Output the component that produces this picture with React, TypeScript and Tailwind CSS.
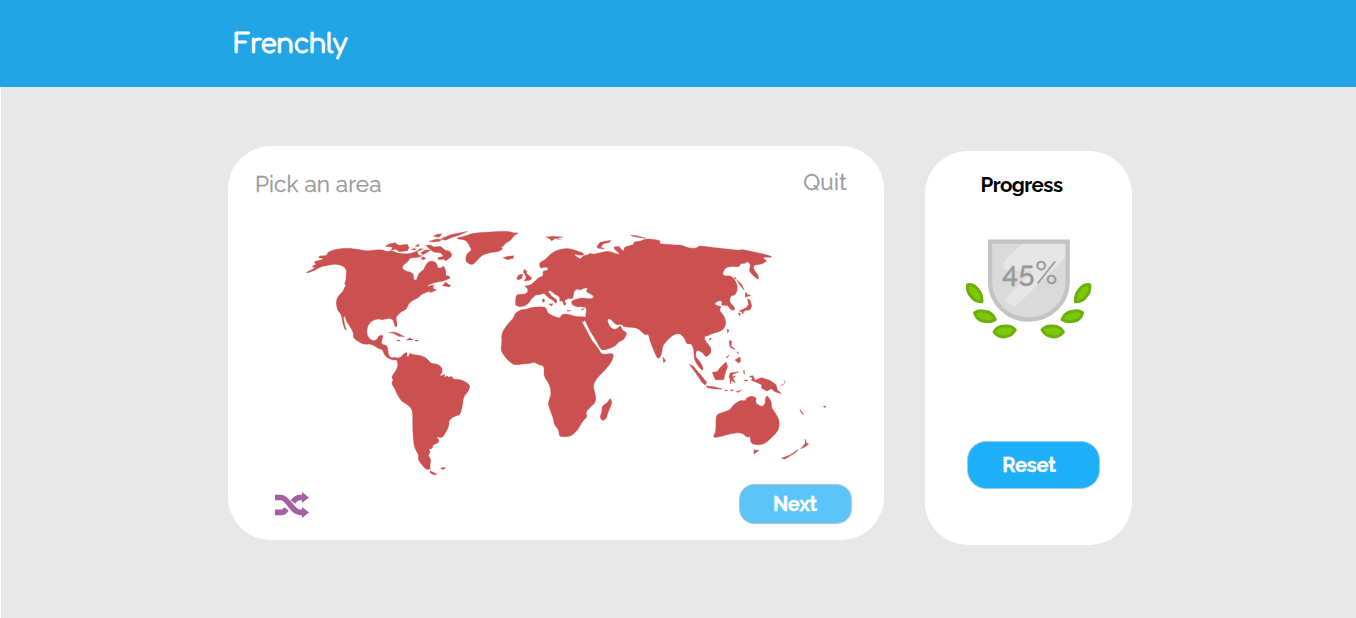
import React from "react";

// Rounds the corners of a straight-edged outline so that coastlines read as curves.
function roundOutline(outline: string) {
  return outline
    .split("M")
    .filter((part) => part.trim())
    .map((part) => {
      if (/[HV]/.test(part)) return "M" + part;
      const n = (part.match(/-?[\d.]+/g) || []).map(Number);
      const pts: number[][] = [];
      for (let i = 0; i + 1 < n.length; i += 2) pts.push([n[i], n[i + 1]]);
      const toward = (a: number[], b: number[]) => {
        const t = 0.38;
        return `${(a[0] + (b[0] - a[0]) * t).toFixed(1)} ${(a[1] + (b[1] - a[1]) * t).toFixed(1)}`;
      };
      return (
        pts
          .map((p, i) => {
            const prev = pts[(i + pts.length - 1) % pts.length];
            const next = pts[(i + 1) % pts.length];
            return `${i ? "L" : "M"}${toward(p, prev)}Q${p[0]} ${p[1]} ${toward(p, next)}`;
          })
          .join("") + "Z"
      );
    })
    .join("");
}

function Land({ d }: { d: string }) {
  return <path d={roundOutline(d)} />;
}

function WorldMap() {
  return (
    <svg className="block h-[255px] w-[530px] fill-[#cb5150] stroke-[#cb5150]" strokeWidth="0.25" strokeLinejoin="round" viewBox="300 225 530 255" role="img" aria-label="World map">
      {/* North America and Greenland */}
      <g transform="translate(300 225) scale(.33333)" strokeWidth="1">
        <Land d="M18 142L40 132 45 126 36 126 38 122 48 119 42 109 60 106 72 101 55 98 58 93 80 92 84 80 110 72 140 69 170 72 200 78 230 74 250 75 262 80 275 76 290 84 320 87 335 84 352 78 356 92 368 91 362 96 340 98 328 101 326 108 310 120 306 130 318 138 333 142 341 149 341 164 348 166 353 155 357 144 371 134 376 122 384 111 396 107 409 113 414 130 424 128 431 122 438 138 437 152 448 153 451 160 430 168 410 172 392 176 379 185 400 180 398 189 411 196 402 198 388 204 391 198 381 201 365 208 355 218 335 228 325 238 320 252 302 262 290 274 288 282 292 300 288 307 283 300 280 286 270 280 255 282 246 285 235 281 215 288 203 302 200 325 208 342 222 348 232 342 236 332 250 330 246 345 244 357 262 362 264 380 267 393 278 401 290 400 298 397 296 405 288 404 276 405 262 398 252 388 248 374 238 372 222 362 210 357 190 358 170 347 160 338 160 322 150 305 140 290 134 273 130 276 134 298 140 318 134 312 128 294 124 268 112 256 108 230 114 214 128 200 134 187 138 181 133 176 138 168 138 150 140 135 128 122 105 117 80 122 66 124 40 138 22 144Z" />
        <path d="M256 64L267 57 285 53 296 61 322 58 327 68 322 77 298 80 288 73 273 76 278 67ZM345 64L357 57 356 65ZM334 74L345 69 346 75ZM347 81L360 71 370 72 358 77ZM362 83L374 76 393 74 379 84 369 89ZM377 61L391 60 402 66 421 64 436 76 448 78 456 88 453 96 437 108 432 103 416 104 413 98 430 94 423 84 401 81 389 72ZM362 100L370 95 378 101 369 104ZM387 49L411 42 425 44 418 49 401 51ZM400 34L411 28 426 27 417 37ZM422 42L451 29 503 19 477 31 451 39 437 46Z" />
        <Land d="M469 39L493 34 510 27 540 22 570 21 600 19 629 19 640 24 658 23 641 32 633 46 617 54 611 63 602 67 610 71 596 80 570 83 546 91 531 106 522 117 512 119 498 111 497 100 501 85 515 76 508 61 497 45 477 43Z" />
        <path d="M427 182L438 170 444 178 452 181 449 186ZM393 181L404 180 398 184ZM267 323L284 321 297 326 314 335 296 334 280 325ZM319 345L329 339 341 345ZM292 345H299V348H292ZM346 345H354V348H346Z" />
        <path d="M136 169L143 171 146 176 147 182 139 186" fill="none" strokeWidth="3" />
      </g>
      {/* South America */}
      <g transform="translate(380 340) scale(.33333)" strokeWidth="1">
        <Land d="M22 47L32 54 48 51 52 56 64 50 70 42 82 36 80 50 86 50 89 39 100 44 120 46 135 52 145 60 152 70 172 72 184 80 188 95 178 109 196 102 191 112 205 107 203 113 216 108 218 117 240 118 262 128 270 138 266 152 250 172 248 195 240 225 225 228 207 240 207 258 196 280 186 294 168 290 178 300 174 310 158 314 158 325 145 328 152 337 144 345 153 358 150 375 151 388 138 389 122 370 114 358 116 345 104 325 100 300 98 260 98 220 94 205 80 192 64 184 50 160 44 145 34 130 40 119 35 113 37 107 50 88 54 75 50 58 36 60Z" />
        <path d="M150 392L172 403 160 404 151 399ZM182 384L194 382 195 387 185 388Z" />
      </g>
      {/* Europe and Asia */}
      <g transform="translate(490 225) scale(.33333)" strokeWidth="1">
        <Land d="M76 240L78 208 105 208 114 200 112 188 102 184 120 180 132 172 145 158 160 153 158 138 174 136 174 128 165 126 150 130 148 112 165 105 180 88 200 76 225 70 245 72 262 78 280 84 282 91 265 90 252 88 262 97 271 102 280 92 296 89 299 84 310 88 330 83 355 78 372 84 392 89 372 71 372 65 388 64 395 74 401 78 403 68 411 63 430 60 432 50 455 48 465 41 500 44 513 49 506 56 560 60 575 60 598 70 622 69 626 62 660 66 702 71 750 76 754 73 800 82 837 91 848 97 816 97 832 108 814 118 792 120 790 132 805 150 806 166 788 150 777 138 782 118 772 109 765 116 752 115 748 126 720 124 705 130 697 147 705 153 720 152 733 161 742 181 742 195 736 210 722 212 718 230 732 245 735 252 729 257 719 251 713 240 694 242 697 230 688 226 672 236 682 242 694 244 688 256 701 271 708 290 706 303 697 316 682 322 666 326 656 331 642 336 648 350 663 368 663 385 648 397 639 384 620 374 616 395 630 410 640 428 638 437 625 425 612 402 612 375 604 355 590 358 585 342 570 325 548 330 518 360 515 390 505 402 498 393 480 348 475 327 465 330 455 320 440 308 402 306 395 298 378 300 362 282 352 282 355 295 362 308 375 314 388 306 391 301 398 316 411 323 404 342 385 352 374 365 345 375 333 375 320 350 300 318 288 292 283 283 287 275 290 248 275 245 262 246 246 240 244 228 260 222 275 218 305 222 312 214 300 206 288 200 294 188 280 190 272 196 264 192 254 196 250 210 248 222 234 220 223 227 229 237 223 243 218 228 208 228 210 216 195 208 180 196 174 199 184 213 203 226 197 236 192 228 172 216 162 204 151 209 136 210 122 225 112 240 92 246 80 242Z" />
        <path d="M39 98L54 94 71 92 70 100 52 104ZM103 132L111 140 109 145 118 152 126 160 120 166 102 168 108 160 106 150 100 142ZM80 160L86 150 98 147 96 160 84 165ZM168 36L190 34 218 36 201 40 213 45 196 40 185 48 180 42ZM320 66L330 52 362 46 359 52 341 56 332 66 344 72 325 70ZM422 30L440 32 468 40 450 38 428 34ZM158 222H163V231H157ZM176 237L189 236 185 243ZM231 255L243 257 233 259ZM273 255L283 249 279 255Z" />
      </g>
      {/* Africa */}
      <g transform="translate(490 300) scale(.33333)" strokeWidth="1">
        <Land d="M92 29L75 40 70 55 50 75 34 102 36 125 32 150 45 172 68 193 80 195 100 192 118 191 133 186 146 194 163 198 161 229 178 252 184 280 174 310 178 324 190 355 192 373 206 390 208 410 240 410 262 392 277 365 292 350 287 335 316 308 318 290 309 258 320 235 350 205 368 180 371 159 335 164 325 145 306 122 291 94 273 60 281 67 284 60 288 50 262 50 230 42 215 43 210 55 190 48 172 38 168 22 150 20 125 22 110 28ZM362 293L366 310 355 335 348 358 335 362 330 350 336 335 336 318 352 308Z" />
      </g>
      {/* East Asian islands */}
      <g transform="translate(630 225) scale(.33333)" strokeWidth="2">
        <path d="M314 156L319 163 315 161ZM321 166L333 176 342 194 335 187ZM347 202L352 209 362 211 346 216ZM353 222L360 226 365 243 360 254 347 256 338 261 328 258 349 248 356 239ZM325 265L331 265 329 272ZM336 262L341 263 337 266ZM292 312L297 316 293 323ZM237 342L244 340 240 346ZM99 397L107 408 101 412Z" />
      </g>
      {/* Southeast Asia and Oceania */}
      <g transform="translate(680 335) scale(.33333)" strokeWidth="1.5">
        <path d="M28 88L40 94 60 118 80 142 76 150 66 142 48 115ZM79 153L100 155 126 162 105 162 82 158ZM136 165H141V168H136ZM150 166L159 164 158 168ZM169 170L185 165 175 172ZM97 112L112 110 120 98 138 81 143 95 136 112 131 134 106 134ZM150 114L176 111 158 118 157 125 167 123 159 130 166 143 155 136 151 147 150 130 147 127ZM148 16L155 19 153 34 166 43 153 39 149 31ZM165 75L180 66 182 79 176 84ZM138 68L147 60 142 68ZM172 50L177 55 172 54ZM192 105L194 118 191 114ZM194 135H202V138H194ZM208 124L219 122 225 136 245 128 272 137 288 149 292 164 304 176 285 170 274 161 261 168 245 160 245 149 229 142 214 136 218 129Z" />
        <Land d="M108 240L128 232 150 225 160 210 180 196 196 198 200 188 216 183 229 188 226 204 246 216 256 206 256 190 262 181 274 200 274 218 290 240 298 258 296 285 275 308 255 325 238 330 213 326 210 302 202 308 185 292 150 296 125 304 102 308 101 301 108 290Z" />
        <path d="M222 345L237 346 222 357ZM305 370L330 360 354 344 349 351 315 372ZM362 342L376 325 375 312 379 323 386 328 372 337ZM360 223L371 239 364 234ZM430 214L437 213 436 218Z" />
        <path d="M301 151L309 150 316 141 311 135" fill="none" strokeWidth="2" />
      </g>
    </svg>
  );
}

function ShuffleIcon() {
  return (
    <svg className="block h-[26px] w-[34px]" viewBox="0 0 34 26" fill="none" stroke="#a35f9f" strokeWidth="5.6">
      <path d="M0 5.5H6C13 5.5 17 20.4 25 20.4H28" />
      <path d="M0 20.4H6Q9 20.4 11.5 17M18 10Q21 5.5 25 5.5H28" />
      <path d="M27 0L34 5.5 27 11ZM27 15L34 20.4 27 26Z" fill="#a35f9f" stroke="none" />
    </svg>
  );
}

function Leaves() {
  return (
    <g fill="#7cc908" stroke="#6baf0b" strokeWidth="9" strokeLinejoin="round">
      <path d="M38 358Q56 356 68 372 82 386 81 409 60 410 48 393 35 379 38 358Z" />
      <path d="M59 442Q72 433 89 438 112 440 121 463 104 473 83 467 65 464 59 442Z" />
      <path d="M117 500Q126 482 149 482 169 480 181 493 172 512 150 514 132 518 117 500Z" />
    </g>
  );
}

function Badge() {
  return (
    <div className="relative h-[106px] w-[126px]">
      <svg className="block h-full w-full" viewBox="33 218 378 318">
        <path d="M105 229H338V349A116.500 111 0 0 1 105 349Z" fill="#dadada" />
        <path d="M202 236H332V276L180 425Q162 418 148 404L237 316H158C143 310 141 295 151 284Z" fill="#e6e6e6" />
        <path d="M105 229H338V349A116.500 114 0 0 1 105 349Z" fill="none" stroke="#c3c3c3" strokeWidth="13" />
        <Leaves />
        <g transform="translate(442 0) scale(-1 1)"><Leaves /></g>
      </svg>
      <div className="absolute left-[36px] top-[17px] flex leading-[36px] text-[#999]">
        <span className="-mt-[0.5px] text-[28.500px] font-medium tracking-[0.8px] [-webkit-text-stroke:0.4px_#999]">45</span>
        <span className="text-[31px] tracking-[0] [-webkit-text-stroke:0.4px_#999]">%</span>
      </div>
    </div>
  );
}

export default function App() {
  return (
    <div className="h-[618px] w-[1356px] overflow-hidden bg-[#e8e8e8] font-['Raleway','Lato',sans-serif]">
      <header className="flex h-[87px] items-start bg-[#21a5e7] pl-[234px] pt-[26px]">
        <h1 className="font-['Comfortaa','Quicksand','Varela_Round','Nunito','Raleway','Lato',sans-serif] text-[26.500px] font-normal leading-[38px] tracking-[-0.6px] text-white [-webkit-text-stroke:1px_white]">Frenchly</h1>
      </header>
      <main className="flex h-[531px] items-start gap-[41px] border-l border-white pl-[227px] pt-[59.500px]">
        <section className="-mt-[0.5px] flex h-[394px] w-[656px] flex-col rounded-[43px] bg-white">
          <div className="flex h-[79px] items-start justify-between pl-[27px] pr-[37px] pt-[20px] text-[22.500px] leading-[32px] text-[#999] [-webkit-text-stroke:0.3px_#999]">
            <h2 className="pt-[2px] tracking-[0.1px]">Pick an area</h2>
            <button className="tracking-[0.3px]">Quit</button>
          </div>
          <div className="pl-[72px]"><WorldMap /></div>
          <div className="flex items-start justify-between pl-[47px] pr-[32.500px] pt-[4px]">
            <button className="pt-[8px]" aria-label="Shuffle"><ShuffleIcon /></button>
            <button className="flex h-[40px] w-[113px] items-center justify-center rounded-[15px] border border-[#b4c5cf] bg-[#5bc5fa] pb-px text-[20px] font-bold tracking-[-0.2px] text-white [-webkit-text-stroke:0.3px_white]">Next</button>
          </div>
        </section>
        <aside className="mt-[4px] flex h-[394px] w-[207px] flex-col items-center rounded-[43px] bg-white">
          <h2 className="mr-[14px] mt-[18px] text-[20.500px] font-bold leading-[32px] tracking-[-0.55px] text-black">Progress</h2>
          <div className="ml-[1px] mt-[37px]"><Badge /></div>
          <button className="ml-[9px] mt-[97px] flex h-[48px] w-[133px] items-center justify-center rounded-[19px] border border-[#9bcce5] bg-[#1daff7] pr-[8px] text-[20px] font-bold tracking-[-0.2px] text-white [-webkit-text-stroke:0.3px_white]">Reset</button>
        </aside>
      </main>
    </div>
  );
}
